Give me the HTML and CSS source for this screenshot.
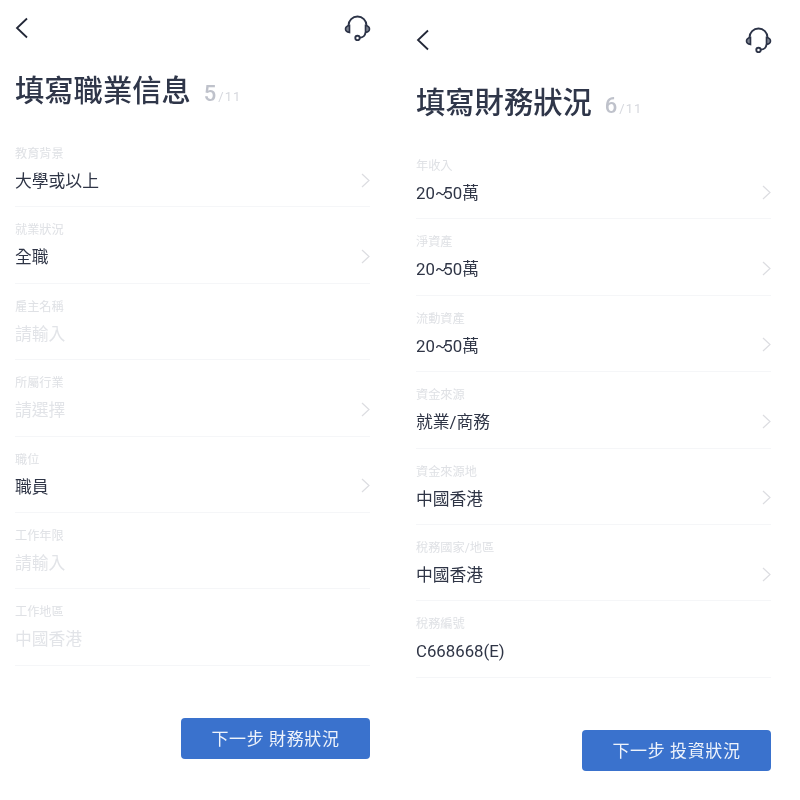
FILE: index.html
```html
<!DOCTYPE html>
<html lang="zh-Hant">
<head>
<meta charset="utf-8">
<title>填寫資料</title>
<link rel="stylesheet" href="styles.css">
</head>
<body>
<div class="screens">
  <section class="panel panel-left">
    <header class="topbar">
      <svg class="back" viewBox="0 0 14 22"><path d="M12 1.500 2 11l10 9.500"/></svg>
      <svg class="support" viewBox="0 0 27 26"><path d="M4.500 11.500V10.500a9 9 0 0 1 18 0v1"/><path class="cup" d="M5.500 10.500v7C3 17 1.500 15.800 1.500 14s1.500-3.100 4-3.500zM21.500 10.500v7c2.500-.5 4-1.700 4-3.500s-1.500-3.100-4-3.500z"/><path d="M21.500 17.500c-.3 3-2.500 5-6 5.300"/><circle cx="13.500" cy="23" r="2.200"/></svg>
    </header>
    <h1 class="title">填寫職業信息<span class="step"><b>5</b><i>/11</i></span></h1>
    <div class="rows">
      <div class="row"><div class="text"><div class="label">教育背景</div><div class="value">大學或以上</div></div><svg class="chev" viewBox="0 0 9 15"><path d="M1 1l7 6.500L1 14"/></svg></div>
      <div class="row"><div class="text"><div class="label">就業狀況</div><div class="value">全職</div></div><svg class="chev" viewBox="0 0 9 15"><path d="M1 1l7 6.500L1 14"/></svg></div>
      <div class="row"><div class="text"><div class="label">雇主名稱</div><div class="value muted">請輸入</div></div></div>
      <div class="row"><div class="text"><div class="label">所屬行業</div><div class="value muted">請選擇</div></div><svg class="chev" viewBox="0 0 9 15"><path d="M1 1l7 6.500L1 14"/></svg></div>
      <div class="row"><div class="text"><div class="label">職位</div><div class="value">職員</div></div><svg class="chev" viewBox="0 0 9 15"><path d="M1 1l7 6.500L1 14"/></svg></div>
      <div class="row"><div class="text"><div class="label">工作年限</div><div class="value muted">請輸入</div></div></div>
      <div class="row"><div class="text"><div class="label">工作地區</div><div class="value muted">中國香港</div></div></div>
    </div>
    <div class="actions"><button class="next">下一步 財務狀況</button></div>
  </section>
  <section class="panel panel-right">
    <header class="topbar">
      <svg class="back" viewBox="0 0 14 22"><path d="M12 1.500 2 11l10 9.500"/></svg>
      <svg class="support" viewBox="0 0 27 26"><path d="M4.500 11.500V10.500a9 9 0 0 1 18 0v1"/><path class="cup" d="M5.500 10.500v7C3 17 1.500 15.800 1.500 14s1.500-3.100 4-3.500zM21.500 10.500v7c2.500-.5 4-1.700 4-3.500s-1.500-3.100-4-3.500z"/><path d="M21.500 17.500c-.3 3-2.500 5-6 5.300"/><circle cx="13.500" cy="23" r="2.200"/></svg>
    </header>
    <h1 class="title">填寫財務狀況<span class="step"><b>6</b><i>/11</i></span></h1>
    <div class="rows">
      <div class="row"><div class="text"><div class="label">年收入</div><div class="value">20<span class="tilde">~</span>50萬</div></div><svg class="chev" viewBox="0 0 9 15"><path d="M1 1l7 6.500L1 14"/></svg></div>
      <div class="row"><div class="text"><div class="label">淨資產</div><div class="value">20<span class="tilde">~</span>50萬</div></div><svg class="chev" viewBox="0 0 9 15"><path d="M1 1l7 6.500L1 14"/></svg></div>
      <div class="row"><div class="text"><div class="label">流動資產</div><div class="value">20<span class="tilde">~</span>50萬</div></div><svg class="chev" viewBox="0 0 9 15"><path d="M1 1l7 6.500L1 14"/></svg></div>
      <div class="row"><div class="text"><div class="label">資金來源</div><div class="value">就業/商務</div></div><svg class="chev" viewBox="0 0 9 15"><path d="M1 1l7 6.500L1 14"/></svg></div>
      <div class="row"><div class="text"><div class="label">資金來源地</div><div class="value">中國香港</div></div><svg class="chev" viewBox="0 0 9 15"><path d="M1 1l7 6.500L1 14"/></svg></div>
      <div class="row"><div class="text"><div class="label">稅務國家/地區</div><div class="value">中國香港</div></div><svg class="chev" viewBox="0 0 9 15"><path d="M1 1l7 6.500L1 14"/></svg></div>
      <div class="row"><div class="text"><div class="label">稅務編號</div><div class="value">C668668(E)</div></div></div>
    </div>
    <div class="actions"><button class="next">下一步 投資狀況</button></div>
  </section>
</div>
</body>
</html>
```
FILE: styles.css
```css
* { box-sizing: border-box; }
html, body { margin: 0; padding: 0; background: #fff; }
body {
  width: 800px;
  height: 800px;
  overflow: hidden;
  font-family: Roboto, "Noto Sans CJK TC", sans-serif;
  color: #2c3347;
}
.screens { display: flex; filter: blur(0.4px); }
.panel { width: 400px; height: 800px; display: flex; flex-direction: column; }
.panel-left { padding: 14px 30px 0 15px; }
.panel-right { padding: 26px 29px 0 16px; }
.topbar { display: flex; justify-content: space-between; align-items: center; height: 28px; }
.back { width: 14px; height: 22px; fill: none; stroke: #222737; stroke-width: 1.800; }
.support { width: 27px; height: 26px; margin-right: -1px; fill: none; stroke: #2c3347; stroke-width: 1.900; }
.support .cup { fill: #7d8391; stroke-width: 1.600; }
.title {
  margin: 28px 0 0;
  height: 42px;
  font-size: 29.300px;
  line-height: 42px;
  font-weight: 500;
  color: #2f3649;
  white-space: nowrap;
}
.step { margin-left: 13px; color: #bfc3cc; font-weight: 400; }
.step b { font-size: 22px; font-weight: 500; color: #bfc2cb; }
.step i { font-style: normal; font-size: 13px; color: #d6d8de; margin-left: 2px; letter-spacing: 1px; }
.rows { margin-top: 19px; display: flex; flex-direction: column; }
.row {
  height: 76.400px;
  padding-top: 15px;
  border-bottom: 1px solid #f5f6f8;
  display: flex;
  justify-content: space-between;
  align-items: center;
}
.row .text { align-self: flex-start; }
.label { font-size: 12.200px; line-height: 17px; color: #dfe1e5; white-space: nowrap; }
.value { margin-top: 6px; font-size: 16.800px; line-height: 24px; color: #2f3546; white-space: nowrap; }
.value.muted { color: #e2e4e8; }
.tilde { letter-spacing: -3px; }
.chev { width: 9px; height: 15px; margin: 8px 0 0; fill: none; stroke: #dcdde1; stroke-width: 1.200; }
.actions { display: flex; justify-content: flex-end; margin-top: 52px; }
.next {
  width: 189px;
  height: 41px;
  padding: 0;
  border: 0;
  border-radius: 4px;
  background: #3a72cd;
  color: #eef3fb;
  font-family: inherit;
  font-size: 17px;
  line-height: 42px;
  letter-spacing: .6px;
  white-space: pre;
}
```
